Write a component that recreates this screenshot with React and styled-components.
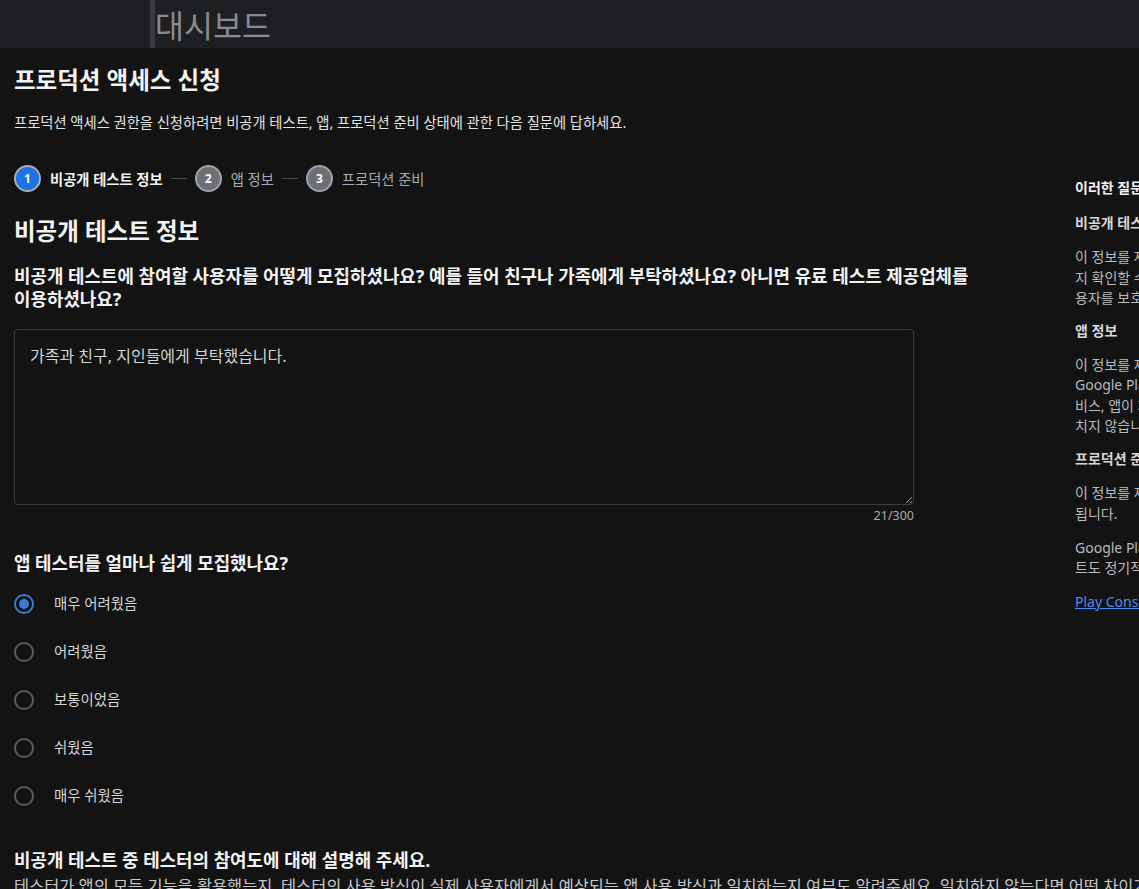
// vendor
import React from 'react';
import styled, { createGlobalStyle } from 'styled-components';

const GlobalStyle = createGlobalStyle`
  html, body {
    margin: 0;
    padding: 0;
    background: #131313;
    overflow: hidden;
    color-scheme: dark;
  }
  body {
    font-family: "Noto Sans", "Noto Sans CJK KR", sans-serif;
    color: #e8eaed;
  }
  * {
    box-sizing: border-box;
  }
`;

// top bar
const TopBar = styled.header`
  height: 48px;
  background: #1e1f22;
  padding-left: 150px;
  display: flex;
  align-items: stretch;
`;
const TopTitle = styled.div`
  border-left: 5px solid #3a3b3e;
  font-size: 31.5px;
  line-height: 52px;
  color: #8a8b8d;
  white-space: nowrap;
`;

// page body
const Body = styled.div`
  display: flex;
  align-items: flex-start;
  padding-left: 14px;
  width: 1500px;
`;
const Main = styled.main`
  width: 1001px;
  flex-shrink: 0;
`;
const PageTitle = styled.h1`
  margin: 17px 0 0;
  font-size: 23.5px;
  line-height: 30px;
  font-weight: 700;
  color: #f1f3f4;
`;
const Intro = styled.p`
  margin: 18px 0 0;
  font-size: 14.3px;
  line-height: 20px;
  color: #e3e3e3;
`;

// stepper
const Stepper = styled.ol`
  list-style: none;
  margin: 31px 0 0;
  padding: 0;
  display: flex;
  align-items: center;
  height: 28px;
`;
const Step = styled.li`
  display: flex;
  align-items: center;
  gap: 9px;
`;
const StepCircle = styled.span`
  width: 27px;
  height: 27px;
  border-radius: 50%;
  border: 2px solid ${(p) => (p.$active ? '#a9acb1' : '#a0a3a7')};
  background: ${(p) => (p.$active ? '#1a73e8' : '#6c7074')};
  color: #fff;
  font-size: 12px;
  font-weight: 700;
  display: flex;
  align-items: center;
  justify-content: center;
`;
const StepLabel = styled.span`
  font-size: 14.3px;
  font-weight: ${(p) => (p.$active ? 700 : 400)};
  color: ${(p) => (p.$active ? '#f1f3f4' : '#a8abaf')};
  white-space: nowrap;
`;
const StepLine = styled.span`
  width: 16px;
  height: 1px;
  background: #4a4c50;
  margin: 0 8px;
`;

// sections
const SectionTitle = styled.h2`
  margin: 24px 0 0;
  font-size: 23.5px;
  line-height: 30px;
  font-weight: 700;
  color: #f1f3f4;
`;
const Question = styled.h3`
  margin: ${(p) => p.$top || 16}px 0 0;
  font-size: 17.9px;
  line-height: 23px;
  font-weight: 700;
  color: #f1f3f4;
  width: 975px;
`;
const Field = styled.div`
  width: 900px;
  margin-top: 18px;
`;
const TextArea = styled.textarea`
  display: block;
  width: 100%;
  height: 176px;
  background: #131313;
  border: 1px solid #3c3d40;
  border-radius: 4px;
  padding: 15px 15px;
  font-family: inherit;
  font-size: 16px;
  line-height: 22px;
  color: #d2d3d5;
  outline: none;
`;
const Counter = styled.div`
  text-align: right;
  font-size: 12.5px;
  line-height: 16px;
  color: #a8abaf;
  margin-top: 3px;
`;

// radios
const RadioList = styled.div`
  margin-top: 5px;
  display: flex;
  flex-direction: column;
`;
const RadioRow = styled.label`
  height: 48px;
  display: flex;
  align-items: center;
  gap: 20px;
  font-size: 14.4px;
  line-height: 20px;
  color: #d6d7d9;
`;
const RadioMark = styled.span`
  width: 20px;
  height: 20px;
  border-radius: 50%;
  border: 2px solid ${(p) => (p.$checked ? '#3d7bd9' : '#5a5c60')};
  display: flex;
  align-items: center;
  justify-content: center;
  &::after {
    content: '';
    width: 10px;
    height: 10px;
    border-radius: 50%;
    background: ${(p) => (p.$checked ? '#3d7bd9' : 'transparent')};
  }
`;
const Description = styled.p`
  margin: 3px 0 0;
  font-size: 16.4px;
  line-height: 22px;
  color: #c4c6c9;
  white-space: nowrap;
`;

// side help panel
const Aside = styled.aside`
  margin-left: 60px;
  padding-top: 130px;
  width: 330px;
  flex-shrink: 0;
  font-size: 14px;
  line-height: 20.3px;
  color: #b8babd;
  white-space: nowrap;
`;
const AsideTitle = styled.div`
  font-weight: 700;
  color: #f1f3f4;
`;
const AsideHead = styled.div`
  margin-top: ${(p) => p.$top || 13}px;
  font-weight: 600;
  color: #d6d7d9;
`;
const AsideText = styled.p`
  margin: 13.7px 0 0;
`;
const AsideLink = styled.a`
  display: block;
  margin-top: 13.7px;
  color: #4c8df6;
  text-decoration: underline;
`;

const OPTIONS = ['매우 어려웠음', '어려웠음', '보통이었음', '쉬웠음', '매우 쉬웠음'];
const STEPS = ['비공개 테스트 정보', '앱 정보', '프로덕션 준비'];

const App = () => (
  <>
    <GlobalStyle />
    <TopBar>
      <TopTitle>대시보드</TopTitle>
    </TopBar>
    <Body>
      <Main>
        <PageTitle>프로덕션 액세스 신청</PageTitle>
        <Intro>
          프로덕션 액세스 권한을 신청하려면 비공개 테스트, 앱, 프로덕션 준비 상태에 관한 다음 질문에 답하세요.
        </Intro>
        <Stepper>
          {STEPS.map((label, i) => (
            <React.Fragment key={label}>
              {i > 0 && <StepLine />}
              <Step>
                <StepCircle $active={i === 0}>{i + 1}</StepCircle>
                <StepLabel $active={i === 0}>{label}</StepLabel>
              </Step>
            </React.Fragment>
          ))}
        </Stepper>
        <SectionTitle>비공개 테스트 정보</SectionTitle>
        <Question $top={19}>
          비공개 테스트에 참여할 사용자를 어떻게 모집하셨나요? 예를 들어 친구나 가족에게 부탁하셨나요? 아니면 유료 테스트 제공업체를 이용하셨나요?
        </Question>
        <Field>
          <TextArea readOnly defaultValue="가족과 친구, 지인들에게 부탁했습니다." />
          <Counter>21/300</Counter>
        </Field>
        <Question $top={28}>앱 테스터를 얼마나 쉽게 모집했나요?</Question>
        <RadioList>
          {OPTIONS.map((opt, i) => (
            <RadioRow key={opt}>
              <RadioMark $checked={i === 0} />
              {opt}
            </RadioRow>
          ))}
        </RadioList>
        <Question $top={29}>비공개 테스트 중 테스터의 참여도에 대해 설명해 주세요.</Question>
        <Description>
          테스터가 앱의 모든 기능을 활용했는지, 테스터의 사용 방식이 실제 사용자에게서 예상되는 앱 사용 방식과 일치하는지 여부도 알려주세요. 일치하지 않는다면 어떤 차이가 있었나요?
        </Description>
      </Main>
      <Aside>
        <AsideTitle>이러한 질문을 하는 이유는 무엇인가요?</AsideTitle>
        <AsideHead $top={15}>비공개 테스트 정보</AsideHead>
        <AsideText>
          이 정보를 제출하면 Google Play에서 앱이 충분히 테스트되었는
          <br />
          지 확인할 수 있으며, 이를 통해 Google Play 사
          <br />
          용자를 보호하는 데 도움이 됩니다.
        </AsideText>
        <AsideHead>앱 정보</AsideHead>
        <AsideText>
          이 정보를 제출하면 앱의 대상과 기능에 대해
          <br />
          Google Play에서 더 잘 파악할 수 있습니다. 앱의 대상 사용자, 서
          <br />
          비스, 앱이 제공하는 가치에 관한 정보는 검토 결과에 영향을 미
          <br />
          치지 않습니다.
        </AsideText>
        <AsideHead>프로덕션 준비 상태</AsideHead>
        <AsideText>
          이 정보를 제출하면 앱의 출시 준비 상태를 평가하는 데 도움이
          <br />
          됩니다.
        </AsideText>
        <AsideText>
          Google Play는 프로덕션 액세스 권한이 부여된 후에도 앱의 비공개 테스
          <br />
          트도 정기적으로 검토합니다.
        </AsideText>
        <AsideLink href="#">Play Console 고객센터에서 자세히 알아보기</AsideLink>
      </Aside>
    </Body>
  </>
);

export default App;
